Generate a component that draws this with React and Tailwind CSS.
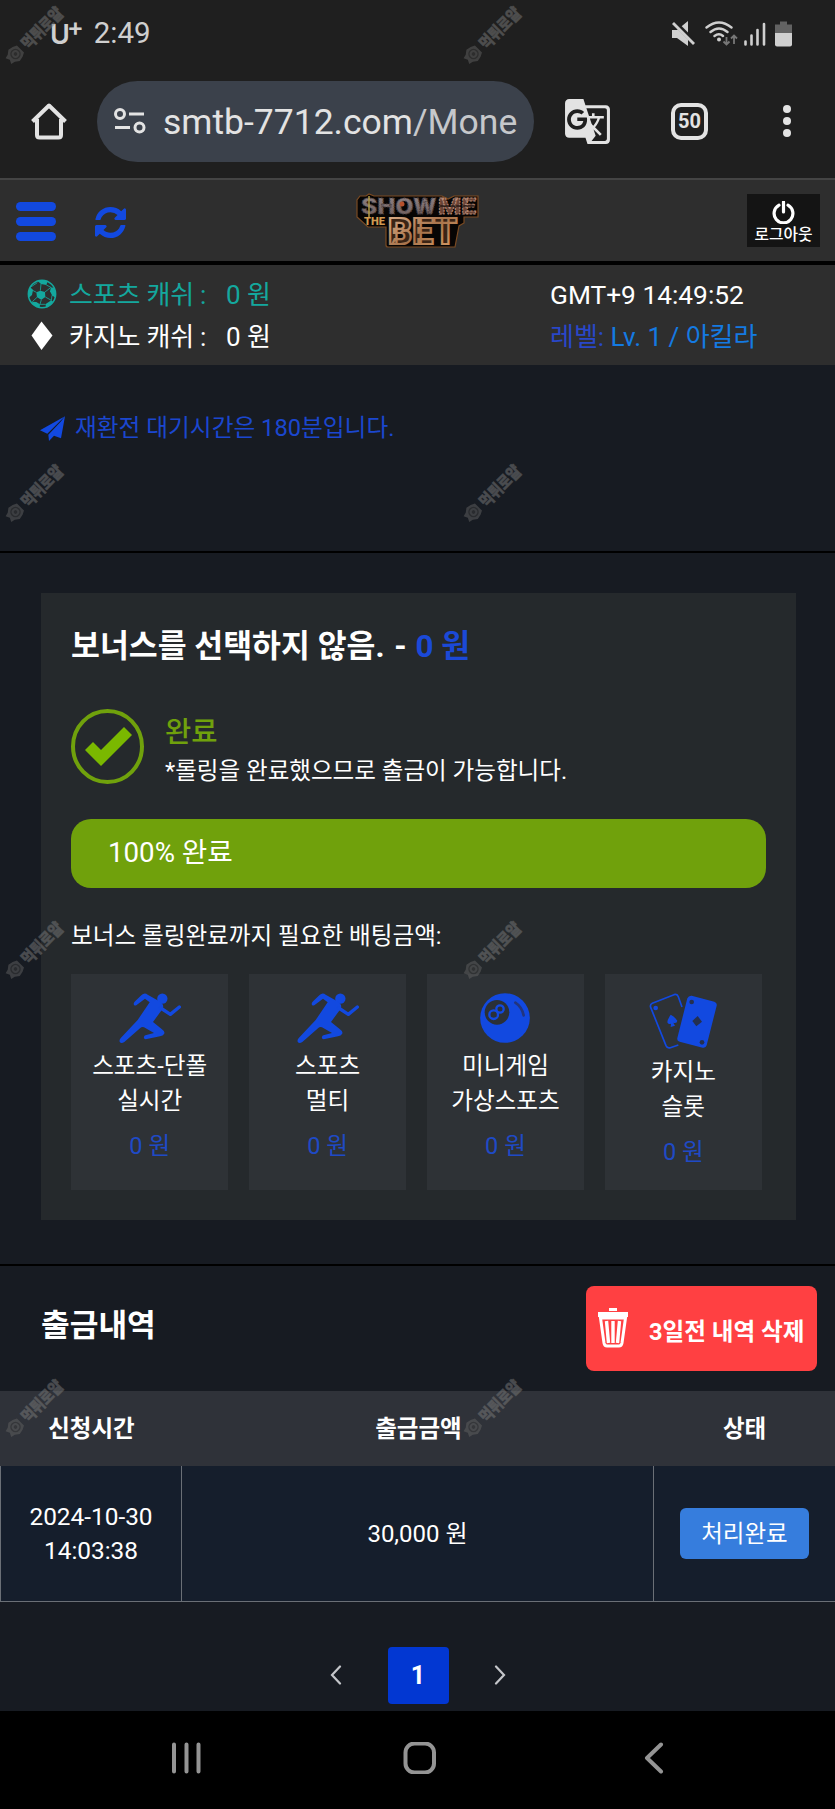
import { MdGTranslate } from "react-icons/md";

const BLUE = "#1249e0";

const MARKS = [1, 458.5, 916, 1374].flatMap((y) => [{ x: 0, y }, { x: 457.5, y }]);

const BETS = [
    { icon: RunnerIcon, lines: ["스포츠-단폴", "실시간"], amount: "0 원" },
    { icon: RunnerIcon, lines: ["스포츠", "멀티"], amount: "0 원" },
    { icon: EightBallIcon, lines: ["미니게임", "가상스포츠"], amount: "0 원" },
    { icon: CardsIcon, lines: ["카지노", "슬롯"], amount: "0 원" },
];

export default function App() {
    return (<div className="relative flex h-[1809px] w-[835px] flex-col overflow-hidden bg-[#171b22] font-['Roboto','Noto_Sans_CJK_KR',sans-serif] text-white">
      <StatusBar />
      <BrowserBar />
      <SiteHeader />
      <CashBar />

      <section className="flex h-[188px] shrink-0 items-start border-b-2 border-black pl-10 pt-[45px] text-[#1b47cf]">
        <div className="flex h-9 items-center">
          <svg className="h-[25px] w-[25px]" viewBox="121 74 75 75" fill={BLUE}>
            <path d="M121 117L196 75L143 127Z"/>
            <path d="M196 75L184 141L163 133L148 149L146 130L183 91Z"/>
          </svg>
          <p className="ml-[10px] text-[23.7px] leading-9">재환전 대기시간은 180분입니다.</p>
        </div>
      </section>

      <BonusPanel />
      <History />

      <nav className="flex h-[98px] shrink-0 items-center bg-black pb-1">
        <svg className="h-8 w-full" viewBox="0 0 835 32" fill="none" stroke="#949494" strokeLinecap="round" strokeWidth="4">
          <path d="M174 2.500V29.500M186.500 2.500V29.500M198.500 2.500V29.500"/>
          <rect x="405.500" y="1.500" width="28.500" height="29" rx="9"/>
          <path d="M661 2.500L647 16L661 29.500" strokeLinejoin="round"/>
        </svg>
      </nav>

      {MARKS.map((m) => (<Mark key={`${m.x}-${m.y}`} {...m}/>))}
    </div>);
}

function StatusBar() {
    return (<div className="flex h-[67px] shrink-0 items-center justify-between bg-[#1f1f1f] pl-[50px] pr-[42px] text-[#cfcfcf]">
      <div className="flex items-center">
        <span className="mt-0.5 font-['Inter'] text-[27px] font-semibold leading-none">U</span>
        <span className="-ml-[3px] -mt-3 font-['Inter'] text-[25px] font-semibold leading-none">+</span>
        <span className="ml-2.5 text-[29.5px] leading-none">2:49</span>
      </div>
      <svg className="h-7 w-[122px]" viewBox="0 0 122 28" fill="#cfcfcf">
        <path d="M1 10H6L17 1V26L6 18H1Z"/>
        <path d="M0 -1L24 23" stroke="#1f1f1f" strokeWidth="5"/>
        <path d="M2 3L23 24" stroke="#cfcfcf" strokeWidth="2.800"/>
        <g fill="none" stroke="#cfcfcf" strokeWidth="2.400" strokeLinecap="round">
          <path d="M35.500 7.500Q48 -2.500 60.500 7.500M39.500 12Q48 5 56.500 12M43.500 16Q48 12.500 52 16"/>
        </g>
        <circle cx="48" cy="19.500" r="2"/>
        <g stroke="#777" strokeWidth="1.800" fill="none">
          <path d="M55.500 17V24M52.500 21.500L55.500 24.500L58.500 21.500M63 24V15.500M60 18.500L63 15.500L66 18.500"/>
        </g>
        <g stroke="#cfcfcf" strokeWidth="2.600" strokeLinecap="round">
          <path d="M74.500 21.500V24.500M80.500 15.500V24.500M86.500 10V24.500M93 4V24.500"/>
        </g>
        <path d="M104 4.500H109V1.500H116V4.500H121V13H104Z" fill="#626262"/>
        <path d="M104 13H121V24.500Q121 26.500 119 26.500H106Q104 26.500 104 24.500Z"/>
      </svg>
    </div>);
}

function BrowserBar() {
    return (<div className="flex h-[113px] shrink-0 items-start border-b-2 border-[#444] bg-[#1f1f1f] pt-[13.5px]">
      <div className="flex h-[81px] w-full items-center">
        <svg className="ml-[30px] h-[38px] w-[38px]" viewBox="0 0 38 38" fill="none" stroke="#e3e3e3" strokeWidth="4">
          <path d="M2.500 19.500L19 3.500L35.500 19.500M7 17V33Q7 35.500 9.500 35.500H28.500Q31 35.500 31 33V17" strokeLinejoin="round"/>
        </svg>
        <div className="ml-[29px] flex h-[81px] w-[437px] items-center rounded-full bg-[#3b414b] pl-[17px]">
          <svg className="h-[26px] w-8" viewBox="0 0 32 26" fill="none" stroke="#e3e3e3" strokeWidth="3">
            <circle cx="6" cy="6" r="4.500"/>
            <circle cx="25.500" cy="19.500" r="4.500"/>
            <path d="M15 6H30M1 19.500H16"/>
          </svg>
          <span className="ml-[17px] mt-[3px] whitespace-nowrap text-[35.5px] leading-none text-[#e3e3e3]">
            smtb-7712.com<span className="text-[#c6c8cb]">/Mone</span>
          </span>
        </div>
        <MdGTranslate className="ml-[29px] h-[49px] w-[49px] text-[#e3e3e3]"/>
        <span className="ml-[59px] flex h-[37px] w-[37px] items-center justify-center rounded-[10px] border-4 border-[#e3e3e3] text-[20px] font-bold text-[#e3e3e3]">50</span>
        <div className="ml-[74.500px] flex flex-col gap-1">
          <span className="h-2 w-2 rounded-full bg-[#e3e3e3]"/>
          <span className="h-2 w-2 rounded-full bg-[#e3e3e3]"/>
          <span className="h-2 w-2 rounded-full bg-[#e3e3e3]"/>
        </div>
      </div>
    </div>);
}

function SiteHeader() {
    return (<header className="flex h-[85px] shrink-0 items-center border-b-4 border-black bg-[#2e2e2e]">
      <button className="ml-4 mt-px flex w-10 flex-col gap-1.5">
        <span className="h-[9px] rounded-full bg-[#1249e0]"/>
        <span className="h-[9px] rounded-full bg-[#1249e0]"/>
        <span className="h-[9px] rounded-full bg-[#1249e0]"/>
      </button>
      <svg className="ml-[39px] mt-[3px] h-[31px] w-[31px]" viewBox="0 0 1536 1536" fill={BLUE}>
        <path d="M1511 928q0 5-1 7-64 268-268 434.5T764 1536q-146 0-282.500-55T238 1324l-129 129q-19 19-45 19t-45-19-19-45V960q0-26 19-45t45-19h448q26 0 45 19t19 45-19 45l-137 137q71 66 161 102t187 36q134 0 250-65t186-179q11-17 53-117 8-23 30-23h192q13 0 22.500 9.500t9.500 22.500zm25-800v448q0 26-19 45t-45 19h-448q-26 0-45-19t-19-45 19-45l138-138Q969 256 768 256q-134 0-250 65T332 500q-11 17-53 117-8 23-30 23H50q-13 0-22.500-9.500T18 608v-7q65-268 270-434.500T768 0q146 0 284 55.500T1297 212l130-129q19-19 45-19t45 19 19 45z"/>
      </svg>
      <Logo />
      <button className="ml-[267px] flex h-[53px] w-[73px] flex-col items-center bg-[#141414] pt-[7px]">
        <svg className="h-[23px] w-[23px]" viewBox="0 0 23 23" fill="none" stroke="#fff" strokeWidth="3.200">
          <path d="M7 4.200A9.400 9.400 0 1 0 16 4.200M11.500 1V11" strokeLinecap="round"/>
        </svg>
        <span className="mt-px whitespace-nowrap text-[15.8px] font-medium leading-5">로그아웃</span>
      </button>
    </header>);
}

function Logo() {
    return (<svg className="ml-[230px] h-[57px] w-[124px] overflow-visible" viewBox="0 0 124 57">
      <defs>
        <linearGradient id="gold" x1="0" y1="0" x2="1" y2="1">
          <stop offset="0" stopColor="#e0b490"/>
          <stop offset="0.5" stopColor="#a8744c"/>
          <stop offset="1" stopColor="#e0a369"/>
        </linearGradient>
        <linearGradient id="stone" x1="0" y1="0" x2="0" y2="1">
          <stop offset="0" stopColor="#8f8487"/>
          <stop offset="1" stopColor="#6d5a58"/>
        </linearGradient>
      </defs>
      <path d="M4 4H10L13 2L18 4H86L92 7L98 4H122V25H108V31L103 34L99 55H32Q30 55 30 53V35H12L1 25V8Z" fill="#070504" stroke="#7a4a22" strokeWidth="1.200"/>
      <g fontFamily="Roboto" fontWeight="900">
        <text x="5" y="22" fontSize="22" textLength="75" lengthAdjust="spacingAndGlyphs" fill="url(#stone)" stroke="#4b3f40" strokeWidth="1" strokeDasharray="1.500 1">SHOW</text>
        <text x="82" y="22" fontSize="22" textLength="38" lengthAdjust="spacingAndGlyphs" fill="#6a4436" stroke="#b98c78" strokeWidth="0.900" strokeDasharray="2 1">ME</text>
        <text x="8" y="33" fontSize="11" textLength="21" lengthAdjust="spacingAndGlyphs" fill="#d09a50">THE</text>
        <text x="32" y="52" fontSize="36" textLength="69" lengthAdjust="spacingAndGlyphs" fill="#3b2415" stroke="url(#gold)" strokeWidth="2.200">BET</text>
      </g>
      <path d="M13 4V25" stroke="#b19a45" strokeWidth="1.500"/>
      <circle cx="46" cy="12" r="2.500" fill="#b6512d"/>
      <path d="M81 14H120" stroke="#070504" strokeWidth="1"/>
    </svg>);
}

function CashBar() {
    return (<section className="flex h-[100px] shrink-0 bg-[#2e2e2e] pt-[9px] text-[26px] leading-[42px]">
      <div className="w-[550px] pl-[27px]">
        <div className="flex h-[42px] items-center text-[#14a89e]">
          <svg className="-mt-0.5 h-[30px] w-[30px]" viewBox="-45 -45 90 90" fill="#14a89e">
            <circle r="41" fill="none" stroke="#14a89e" strokeWidth="4.500"/>
            <path d="M-5 -10L9 -6L10 9L-2 17L-15 10L-17 -5Z"/>
            <path d="M-14 -40Q3 -45 17 -38L13 -27L-3 -30Z"/>
            <path d="M27 -20L38 -18Q44 -3 40 11L30 4L24 -8Z"/>
            <path d="M28 19L34 24Q26 37 13 41L10 31Z"/>
            <path d="M-17 24L-6 31L-7 41Q-20 39 -30 30L-29 23Z"/>
            <path d="M-35 -20L-27 -12L-30 3L-40 12Q-45 -6 -35 -20Z"/>
            <path d="M-5 -10L-3 -30M9 -6L27 -20M10 9L28 19M-2 17L-6 31M-15 10L-29 23M-17 -5L-30 -12M13 -27L27 -20M30 4L28 19M10 31L-6 31M-35 -20L-14 -34" fill="none" stroke="#14a89e" strokeWidth="2.500"/>
          </svg>
          <span className="ml-3 w-[157px] whitespace-nowrap tracking-[-0.2px]">스포츠 캐쉬 :</span>
          <span>0 원</span>
        </div>
        <div className="flex h-[42px] items-center">
          <svg className="-mt-0.5 h-[30px] w-[30px]" viewBox="0 0 30 30" fill="#fff">
            <path d="M14.500 0.500L25.500 14.500L14.500 29L4.500 14.500Z"/>
          </svg>
          <span className="ml-3 w-[157px] whitespace-nowrap tracking-[-0.2px]">카지노 캐쉬 :</span>
          <span>0 원</span>
        </div>
      </div>
      <div>
        <p className="text-[26.3px]">GMT+9 14:49:52</p>
        <p className="text-[#2947c8]">레벨: <span className="text-[#147ae2]">Lv. 1 / 아킬라</span></p>
      </div>
    </section>);
}

function BonusPanel() {
    return (<section className="flex h-[713px] shrink-0 flex-col border-b-2 border-black px-[41px] pt-10">
      <div className="h-[627px] w-[755px] bg-[#25292c] px-[30px] pt-[33px]">
        <h2 className="text-[31.4px] font-bold leading-[42px]">보너스를 선택하지 않음. <span className="ml-0.5">-</span> <span className="ml-px text-[#1b49d8]">0 원</span></h2>

        <div className="mt-[41px] flex h-[75px]">
          <svg className="h-[75px] w-[73px]" viewBox="0 0 73 75">
            <ellipse cx="36.500" cy="37.500" rx="34.500" ry="35.500" fill="none" stroke="#70a10c" strokeWidth="4"/>
            <path d="M14 41L22 33L30 41L53 18L61 26L30 57Z" fill="#7ab800"/>
          </svg>
          <div className="ml-[21px] pt-0.5">
            <p className="text-[28.5px] font-medium leading-[44px] text-[#70a10c]">완료</p>
            <p className="text-[23.55px] leading-[33px]">*롤링을 완료했으므로 출금이 가능합니다.</p>
          </div>
        </div>

        <div className="mt-[35px] flex h-[69px] w-[695px] items-center rounded-[20px] bg-[#70a10c] pl-[37px] text-[27.7px]">
          <span className="-mt-px leading-9">100% 완료</span>
        </div>

        <p className="mt-[31px] text-[23.6px] leading-[34px]">보너스 롤링완료까지 필요한 배팅금액:</p>

        <div className="mt-[21px] grid w-[691px] grid-cols-4 gap-[20.5px]">
          {BETS.map((b) => (<div key={b.lines[0]} className="flex h-[216px] flex-col items-center bg-[#2e3236] pt-[19px] text-[23.6px] leading-[35px]">
              <b.icon />
              <p className="mt-1.5">{b.lines[0]}</p>
              <p>{b.lines[1]}</p>
              <p className="mt-2.5 text-[#1f4ac6]">{b.amount}</p>
            </div>))}
        </div>
      </div>
    </section>);
}

function RunnerIcon() {
    return (<svg className="h-[50px] w-[62px]" viewBox="355 280 186 150" fill={BLUE}>
      <circle cx="485" cy="297" r="15.500"/>
      <path d="M430 282Q436 281 441 285L476 305Q492 315 486 327L457 367L482 387Q495 396 490 403Q487 409 478 410L435 419Q428 418 430 411Q431 407 437 406L460 400L430 383Q424 380 418 386L371 427Q361 433 357 426Q355 420 361 414L411 361L447 308L433 297L407 317Q399 320 399 312Q400 308 404 304L422 287Q426 282 430 282Z"/>
      <path d="M480 325L509 344L536 322" fill="none" stroke={BLUE} strokeWidth="10" strokeLinecap="round" strokeLinejoin="round"/>
    </svg>);
}

function EightBallIcon() {
    return (<svg className="h-[50px] w-[50px]" viewBox="196 280 150 150">
      <circle cx="271" cy="355" r="74.500" fill={BLUE}/>
      <circle cx="247" cy="338" r="37" fill="#2b3036"/>
      <g fill="none" stroke={BLUE} strokeWidth="7">
        <circle cx="256" cy="328" r="11"/>
        <circle cx="237" cy="345" r="13"/>
      </g>
      <path d="M302 309Q321 321 327 347" fill="none" stroke="#22357e" strokeWidth="8" strokeLinecap="round"/>
    </svg>);
}

function CardsIcon() {
    return (<svg className="h-[56px] w-[68px]" viewBox="701 280 204 168">
      <path d="M800 322L789 291Q786 282 776 285L711 311Q703 315 706 323L752 438Q756 447 765 444L789 436" fill="none" stroke={BLUE} strokeWidth="5"/>
      <circle cx="721" cy="325" r="7" fill={BLUE}/>
      <path d="M766 345Q756 360 756 368Q758 376 767 372L766 382L779 378L774 369Q785 372 786 363Q780 353 766 345Z" fill={BLUE}/>
      <path d="M829 288L897 306Q906 309 904 318L874 437Q871 446 862 444L793 426Q784 424 786 415L816 296Q820 287 829 288Z" fill={BLUE}/>
      <g fill="#243050">
        <path d="M847 349L860 366L843 380L831 364Z"/>
        <circle cx="829" cy="307" r="7"/>
        <circle cx="860" cy="428" r="7"/>
      </g>
    </svg>);
}

function History() {
    return (<section className="flex grow flex-col">
      <div className="flex h-[125px] items-start justify-between pl-[41px] pr-[18px] pt-5">
        <h2 className="pt-[19px] text-[31.2px] font-bold leading-[42px]">출금내역</h2>
        <button className="flex h-[85px] w-[231px] rounded-lg bg-[#ff4042] pl-[11px] pt-[21px]">
          <svg className="h-[41px] w-8" viewBox="0 0 32 41" fill="none" stroke="#fff">
            <path d="M12 2.500H20" strokeWidth="3"/>
            <path d="M1 7.500H31" strokeWidth="5"/>
            <path d="M3.500 11L7 36Q7.500 39 10 39H22Q24.500 39 25 36L28.500 11Z" strokeWidth="3"/>
            <path d="M9.500 14L11.500 36M16 14V36M22.500 14L20.500 36" strokeWidth="3.400"/>
          </svg>
          <span className="ml-5 mt-[7px] whitespace-nowrap text-[23.6px] font-bold leading-9">3일전 내역 삭제</span>
        </button>
      </div>

      <div className="grid h-[75px] grid-cols-[183px_471px_181px] items-center bg-[#2f3239] pt-0.5 text-center text-[23.5px] font-bold">
        <span>신청시간</span>
        <span>출금금액</span>
        <span>상태</span>
      </div>
      <div className="grid h-[136px] grid-cols-[181px_472px_181px] border-b border-l border-[#6a6f76] bg-[#151e2c] text-center text-[24.4px] leading-[34.5px]">
        <div className="flex items-center justify-center border-r border-[#6a6f76] pt-px">2024-10-30<br />14:03:38</div>
        <div className="flex items-center justify-center border-r border-[#6a6f76] pt-0.5 text-[24px]">30,000 원</div>
        <div className="flex items-center justify-center">
          <span className="h-[51px] w-[129px] rounded-md bg-[#367ddd] text-[23.5px] leading-[53px]">처리완료</span>
        </div>
      </div>

      <div className="flex items-start justify-center pl-px pt-[45px]">
        <svg className="mt-[18px] h-5 w-3" viewBox="0 0 12 20" fill="none" stroke="#c4c6ca" strokeWidth="2.200" strokeLinecap="round">
          <path d="M10 1.500L2 10L10 18.500"/>
        </svg>
        <span className="mx-[45.5px] h-[57px] w-[61px] rounded bg-[#0237d2] text-center text-[25px] font-bold leading-[57px]">1</span>
        <svg className="mt-[18px] h-5 w-3" viewBox="0 0 12 20" fill="none" stroke="#c4c6ca" strokeWidth="2.200" strokeLinecap="round">
          <path d="M2 1.500L10 10L2 18.500"/>
        </svg>
      </div>
    </section>);
}

function Mark({ x, y }) {
    return (<svg className="pointer-events-none absolute h-[70px] w-[70px] overflow-visible opacity-50" style={{ left: x, top: y }} viewBox="0 0 70 70">
      <g transform="translate(15.500 53) rotate(-45)">
        <path d="M-2 -8L3 -7L7 -5L7 0L7 5L3 7L-2 8L-6 5L-10 4L-8 0L-10 -4L-6 -5Z" fill="#626262"/>
        <circle r="4.500" fill="none" stroke="#3c3c3c" strokeWidth="1.500"/>
        <circle r="1.800" fill="#3c3c3c"/>
        <text x="11.500" y="6.500" fontFamily="Noto Sans CJK KR" fontWeight="900" fontSize="16.500" textLength="51" lengthAdjust="spacingAndGlyphs" fill="#7c7c7c" stroke="#7c7c7c" strokeWidth="0.500">먹튀로얄</text>
      </g>
    </svg>);
}
